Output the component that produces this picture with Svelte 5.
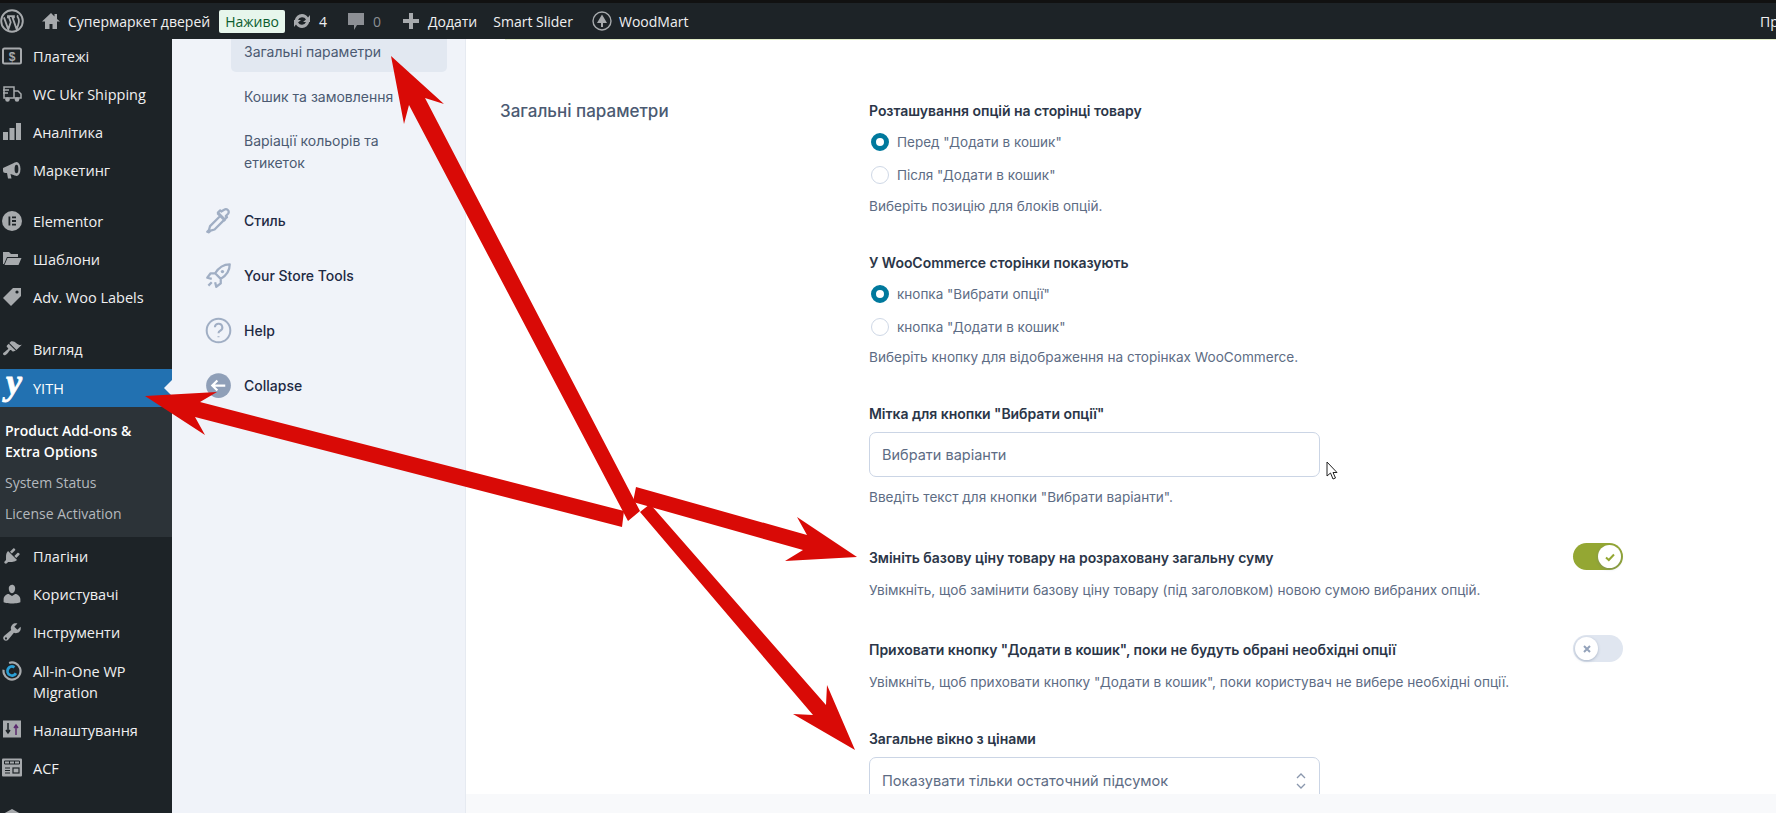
<script>
  const menuGroups = [
    [
      { label: 'Платежі', icon: 'pay' },
      { label: 'WC Ukr Shipping', icon: 'truck' },
      { label: 'Аналітика', icon: 'bars' },
      { label: 'Маркетинг', icon: 'mega' }
    ],
    [
      { label: 'Elementor', icon: 'elementor' },
      { label: 'Шаблони', icon: 'folder' },
      { label: 'Adv. Woo Labels', icon: 'tag' }
    ]
  ];

  const lowerMenu = [
    { label: 'Плагіни', icon: 'plug' },
    { label: 'Користувачі', icon: 'user' },
    { label: 'Інструменти', icon: 'wrench' },
    { label: 'All-in-One WP Migration', icon: 'migrate', tall: true },
    { label: 'Налаштування', icon: 'sliders' },
    { label: 'ACF', icon: 'acf' }
  ];

  let beforeCart = $state('before');
  let shopButton = $state('choose');
  let labelText = $state('Вибрати варіанти');
  let changePrice = $state(true);
  let hideButton = $state(false);
</script>

{#snippet menuIcon(name)}
  <svg class="micon" viewBox="0 0 20 20" aria-hidden="true">
    {#if name === 'pay'}
      <rect x="1" y="2.500" width="18" height="15" rx="1.500" fill="none" stroke="#a7aaad" stroke-width="2" />
      <text x="10" y="14.500" text-anchor="middle" font-size="12" font-weight="700" font-family="Liberation Sans" fill="#a7aaad">$</text>
    {:else if name === 'truck'}
      <path d="M2 3h10v11H2zM12 7h4l3 3v4h-7zM1 6h6M1 9h5" fill="none" stroke="#a7aaad" stroke-width="1.500" />
      <circle cx="5.500" cy="15.500" r="2.300" fill="#a7aaad" /><circle cx="15" cy="15.500" r="2.300" fill="#a7aaad" />
    {:else if name === 'bars'}
      <path d="M1 10h5v8H1zM7.500 6h5v12h-5zM14 1h5v17h-5z" fill="#a7aaad" />
    {:else if name === 'mega'}
      <path d="M1 8l12-5.500v13L8.500 14l1 4.500H6L5 13H3.500Q1 13 1 10.500z" fill="#a7aaad" />
      <ellipse cx="14.500" cy="9" rx="4" ry="7" fill="#a7aaad" />
      <ellipse cx="14.500" cy="9" rx="1.900" ry="4.300" fill="#1d2327" />
    {:else if name === 'elementor'}
      <circle cx="10" cy="10" r="10" fill="#a7aaad" />
      <path d="M6.500 5.500h1.800v9H6.500zM10 5.500h4v1.800h-4zM10 9.100h4v1.800h-4zM10 12.700h4v1.800h-4z" fill="#1d2327" />
    {:else if name === 'folder'}
      <path d="M1 3h6l2 2h7v3H5L2 15H1zM5.500 9H19.500l-3 7H2.500z" fill="#a7aaad" />
    {:else if name === 'tag'}
      <path d="M11 1h8v8L9 19l-8-8z" fill="#a7aaad" />
      <circle cx="15" cy="5" r="1.600" fill="#1d2327" />
    {:else if name === 'brush'}
      <path d="M14.480 11.060L7.410 3.990l1.500-1.500c.500-.560 2.300-.470 3.510.320 1.210.800 1.430 1.280 2.910 2.100 1.180.640 2.450 1.260 4.450.850zm-.710.710L6.700 4.700 4.930 6.470c-.390.390-.390 1.020 0 1.410l1.060 1.060c.390.390.390 1.030 0 1.420-.600.600-1.430 1.110-2.210 1.690-.350.260-.700.530-1.010.840C1.430 13.230.400 14.850 1.400 15.850c.990 1 2.620-.030 3.960-1.370.310-.310.580-.660.840-1.020.580-.780 1.090-1.610 1.690-2.210.390-.390 1.020-.390 1.410 0l1.060 1.060c.390.390 1.020.390 1.410 0z" fill="#a7aaad" />
    {:else if name === 'plug'}
      <path d="M13.110 4.360L9.870 7.600 8 5.730l3.240-3.240c.350-.340 1.050-.200 1.560.320.520.510.660 1.210.310 1.550zm-8 1.770l.910-1.120 9.010 9.010-1.190.840c-.710.710-2.630 1.160-3.820 1.160H6.140L4.900 17.260c-.590.590-1.540.590-2.120 0-.590-.580-.590-1.530 0-2.120l1.240-1.240v-3.880c0-1.130.420-3.070 1.090-3.890zm7.260 3.970l3.240-3.240c.340-.350 1.040-.200 1.560.310.510.520.660 1.220.310 1.570l-3.240 3.250z" fill="#a7aaad" />
    {:else if name === 'user'}
      <path d="M10 9.250c-2.270 0-2.730-3.440-2.730-3.440C7 4.020 7.820 2 9.970 2c2.160 0 2.980 2.020 2.710 3.810 0 0-.410 3.440-2.680 3.440zm0 2.570L12.720 10c2.390 0 4.520 2.330 4.520 4.530v2.490s-3.650 1.130-7.240 1.130c-3.650 0-7.240-1.130-7.240-1.130v-2.490c0-2.250 1.940-4.530 4.430-4.530z" fill="#a7aaad" transform="translate(-1.600 -1.600) scale(1.160)" />
    {:else if name === 'wrench'}
      <path d="M16.680 9.770c-1.340 1.340-3.300 1.670-4.950.990l-5.410 6.520c-.990.990-2.590.990-3.580 0s-.990-2.590 0-3.570l6.520-5.420c-.680-1.650-.350-3.610.990-4.950 1.280-1.280 3.120-1.620 4.720-1.060l-2.890 2.890 2.820 2.820 2.860-2.870c.530 1.580.180 3.390-1.080 4.670zM3.810 16.560c.380.380 1.010.380 1.390 0 .380-.390.380-1.010 0-1.400-.380-.380-1.010-.380-1.390 0-.390.390-.390 1.010 0 1.400z" fill="#a7aaad" transform="translate(-1 -1) scale(1.100)" />
    {:else if name === 'migrate'}
      <circle cx="10" cy="10" r="8.500" fill="none" stroke="#a7aaad" stroke-width="2.200" stroke-dasharray="44 10" transform="rotate(-110 10 10)" />
      <circle cx="10" cy="10" r="4.500" fill="none" stroke="#2a9fd6" stroke-width="2.800" stroke-dasharray="21 7" transform="rotate(30 10 10)" />
    {:else if name === 'sliders'}
      <rect x="1" y="0.500" width="18" height="17" fill="#a7aaad" />
      <path d="M6 3v9M4 10l2 3 2-3" fill="none" stroke="#1d2327" stroke-width="1.500" />
      <path d="M14 15V6M12 8l2-3 2 3" fill="none" stroke="#5b2a6e" stroke-width="1.500" />
    {:else if name === 'acf'}
      <rect x="0" y="0.500" width="20" height="18" rx="1" fill="#a7aaad" />
      <path d="M2.500 3h15v3h-15z" fill="none" stroke="#1d2327" stroke-width="1" />
      <path d="M7.500 3v3M12.500 3v3M3 10h5M3 12.500h5M3 15h5" stroke="#1d2327" stroke-width="1" />
      <rect x="11" y="10" width="6" height="5" fill="none" stroke="#1d2327" stroke-width="1.200" />
    {:else if name === 'more'}
      <path d="M10 0l9 5v15H1V5z" fill="#a7aaad" />
    {/if}
  </svg>
{/snippet}

{#snippet menuItem(item)}
  <a class="mitem" class:tall={item.tall} href="#top">
    {@render menuIcon(item.icon)}
    <span>{item.label}</span>
  </a>
{/snippet}

<div class="page">
  <header class="adminbar">
    <svg class="wp" viewBox="0 0 20 20" aria-hidden="true">
      <circle cx="10" cy="10" r="9" fill="none" stroke="#a7aaad" stroke-width="1.600" />
      <path d="M3.300 7l3.600 10 2-6-1.400-4H6.600V6h5v1h-1.200l3.500 10 1.200-3.600q1-2.900.6-4.400-.4-1.500-1-2.300-.4-.7.400-1.400" fill="none" stroke="#a7aaad" stroke-width="1.500" />
    </svg>
    <a class="bar-link site" href="#top">
      <svg viewBox="0 0 20 20" aria-hidden="true"><path d="M10 2L1 10.500h3V18h4.500v-5h3v5H16v-7.500h3L16 8V3h-2.500v2.500z" fill="#a7aaad" /></svg>
      Супермаркет дверей
    </a>
    <span class="live">Наживо</span>
    <a class="bar-link updates" href="#top">
      <svg viewBox="0 0 20 20" aria-hidden="true">
        <path d="M10 3a7 7 0 0 1 6 3.500L18 4v7h-7l3-2.500A4.500 4.500 0 0 0 6 9H2.800A7.200 7.200 0 0 1 10 3zM10 17a7 7 0 0 1-6-3.500L2 16V9h7l-3 2.500A4.500 4.500 0 0 0 14 11h3.200A7.200 7.200 0 0 1 10 17z" fill="#a7aaad" />
      </svg>
      4
    </a>
    <a class="bar-link comments" href="#top">
      <svg viewBox="0 0 20 20" aria-hidden="true"><path d="M2 2h16v12h-7l-3 5v-5H2z" fill="#8c8f94" /></svg>
      0
    </a>
    <a class="bar-link add" href="#top">
      <svg viewBox="0 0 20 20" aria-hidden="true"><path d="M8 2h4v6h6v4h-6v6H8v-6H2V8h6z" fill="#a7aaad" /></svg>
      Додати
    </a>
    <a class="bar-link smart" href="#top">Smart Slider</a>
    <a class="bar-link wood" href="#top">
      <svg viewBox="0 0 20 20" aria-hidden="true">
        <circle cx="10" cy="10" r="9" fill="none" stroke="#a7aaad" stroke-width="1.400" />
        <path d="M10 3.500l5 8.500h-4v4H9v-4H5z" fill="#a7aaad" />
      </svg>
      WoodMart
    </a>
    <span class="bar-end">Пр</span>
  </header>

  <div class="columns">
    <nav class="sidebar">
      <div class="group first">
        {#each menuGroups[0] as item}{@render menuItem(item)}{/each}
      </div>
      <div class="group">
        {#each menuGroups[1] as item}{@render menuItem(item)}{/each}
      </div>
      <div class="group third">
        {@render menuItem({ label: 'Вигляд', icon: 'brush' })}
        <a class="mitem current" href="#top">
          <span class="yith-mark">y</span>
          <span>YITH</span>
        </a>
        <div class="submenu">
          <a class="strong" href="#top">Product Add-ons &amp; Extra Options</a>
          <a href="#top">System Status</a>
          <a href="#top">License Activation</a>
        </div>
        {#each lowerMenu as item}{@render menuItem(item)}{/each}
      </div>
      <div class="group">
        <a class="mitem" href="#top">{@render menuIcon('more')}</a>
      </div>
    </nav>

    <aside class="subnav">
      <a class="subitem active" href="#top">Загальні параметри</a>
      <a class="subitem" href="#top">Кошик та замовлення</a>
      <a class="subitem" href="#top">Варіації кольорів та етикеток</a>

      <a class="navrow first" href="#top">
        <svg viewBox="0 0 24 24" aria-hidden="true">
          <path d="M13.500 8L4.500 17l-1 3.500-1.500 1.500 1.500.5 1.500-1.500 3.500-1 9-9M11 5.500l7 7M17 2.500a2.500 2.500 0 0 1 3.500 3.500L18.500 8l1 1-2 2-6-6 2-2 1 1z" fill="none" stroke="#a0aec4" stroke-width="2" stroke-linejoin="round" />
        </svg>
        Стиль
      </a>
      <a class="navrow" href="#top">
        <svg viewBox="0 0 24 24" aria-hidden="true">
          <path d="M22 2c-6 0-10 3-13 8l5 5c5-3 8-7 8-13zM9 10H5l-3 4 4 1M14 15v4l-4 3-1-4M6 18l-3 3" fill="none" stroke="#a0aec4" stroke-width="2" stroke-linejoin="round" />
          <circle cx="15.500" cy="8.500" r="1.500" fill="#a0aec4" />
        </svg>
        Your Store Tools
      </a>
      <a class="navrow" href="#top">
        <svg viewBox="0 0 24 24" aria-hidden="true">
          <circle cx="12" cy="12" r="10.500" fill="none" stroke="#a0aec4" stroke-width="1.800" />
          <path d="M8.800 9.200a3.300 3.300 0 1 1 4.800 3c-1 .6-1.600 1.200-1.600 2.300M12 17v1" fill="none" stroke="#a0aec4" stroke-width="1.800" />
        </svg>
        Help
      </a>
      <a class="navrow" href="#top">
        <svg viewBox="0 0 24 24" aria-hidden="true">
          <circle cx="12" cy="12" r="11" fill="#8f9fb8" />
          <path d="M18 12H7M11 7.500L6.500 12l4.500 4.500" fill="none" stroke="#fff" stroke-width="2" />
        </svg>
        Collapse
      </a>
    </aside>

    <main class="content">
      <h2>Загальні параметри</h2>

      <div class="fields">
        <section class="field">
          <div class="label">Розташування опцій на сторінці товару</div>
          <label class="radio"><input type="radio" bind:group={beforeCart} value="before" /><span>Перед "Додати в кошик"</span></label>
          <label class="radio"><input type="radio" bind:group={beforeCart} value="after" /><span>Після "Додати в кошик"</span></label>
          <p>Виберіть позицію для блоків опцій.</p>
        </section>

        <section class="field">
          <div class="label">У WooCommerce сторінки показують</div>
          <label class="radio"><input type="radio" bind:group={shopButton} value="choose" /><span>кнопка "Вибрати опції"</span></label>
          <label class="radio"><input type="radio" bind:group={shopButton} value="add" /><span>кнопка "Додати в кошик"</span></label>
          <p>Виберіть кнопку для відображення на сторінках WooCommerce.</p>
        </section>

        <section class="field">
          <div class="label">Мітка для кнопки "Вибрати опції"</div>
          <input class="text" type="text" bind:value={labelText} />
          <p class="after-input">Введіть текст для кнопки "Вибрати варіанти".</p>
        </section>

        <section class="field price">
          <div class="toggle-row">
            <div class="label">Змініть базову ціну товару на розраховану загальну суму</div>
            <button class="toggle" class:on={changePrice} onclick={() => (changePrice = !changePrice)} aria-label="toggle">
              <span class="knob">
                <svg viewBox="0 0 12 12"><path d="M2 6.500l2.800 2.500L10 3.500" fill="none" stroke="#94a733" stroke-width="2" /></svg>
              </span>
            </button>
          </div>
          <p class="after-toggle">Увімкніть, щоб замінити базову ціну товару (під заголовком) новою сумою вибраних опцій.</p>
        </section>

        <section class="field">
          <div class="toggle-row">
            <div class="label">Приховати кнопку "Додати в кошик", поки не будуть обрані необхідні опції</div>
            <button class="toggle" class:on={hideButton} onclick={() => (hideButton = !hideButton)} aria-label="toggle">
              <span class="knob">
                <svg viewBox="0 0 12 12"><path d="M3 3l6 6M9 3l-6 6" fill="none" stroke="#94a3bb" stroke-width="2" /></svg>
              </span>
            </button>
          </div>
          <p class="after-toggle">Увімкніть, щоб приховати кнопку "Додати в кошик", поки користувач не вибере необхідні опції.</p>
        </section>

        <section class="field">
          <div class="label">Загальне вікно з цінами</div>
          <div class="select">
            <span>Показувати тільки остаточний підсумок</span>
            <svg viewBox="0 0 12 20" aria-hidden="true"><path d="M2 7l4-4 4 4M2 13l4 4 4-4" fill="none" stroke="#8a97ad" stroke-width="1.300" /></svg>
          </div>
        </section>
      </div>
    </main>
  </div>

  <div class="footer-strip"></div>

  <!-- annotation drawn over the screenshot -->
  <svg class="arrows" viewBox="0 0 1776 813" aria-hidden="true">
    <path d="M391 56L444 104 425 98 640 511 628 521 409 105 404 124z" fill="#d90a06" />
    <path d="M145 396L217 392 200 402 624 511 622 527 195 417 205 435z" fill="#d90a06" />
    <path d="M857 557L785 561 803 550 633 502 636 487 807 535 797 517z" fill="#d90a06" />
    <path d="M855 750L793 714 813 715 640 512 650 504 826 705 827 685z" fill="#d90a06" />
  </svg>
  <svg class="cursor" viewBox="0 0 12 20" aria-hidden="true">
    <path d="M1 1v14l3.500-3 2.500 6 2.500-1-2.500-5.500H11z" fill="#fff" stroke="#222" stroke-width="1" />
  </svg>
</div>

<style>
  :global(body) {
    margin: 0;
    background: #fff;
  }

  .page {
    position: relative;
    width: 1776px;
    height: 813px;
    overflow: hidden;
    font-family: "Open Sans", "Noto Sans", sans-serif;
    display: flex;
    flex-direction: column;
  }

  a {
    text-decoration: none;
    color: inherit;
  }

  .adminbar {
    flex: none;
    height: 36px;
    border-top: 3px solid #111;
    background: #1d2327;
    color: #f0f0f1;
    display: flex;
    align-items: center;
    font-size: 14px;
  }

  .wp {
    width: 24px;
    height: 24px;
    margin-right: 17px;
  }

  .bar-link {
    display: flex;
    align-items: center;
    gap: 7px;
    white-space: nowrap;
  }

  .bar-link svg {
    width: 20px;
    height: 20px;
  }

  .site {
    margin-right: 9px;
  }

  .live {
    background: #e7f6ec;
    color: #0b5c2e;
    border-radius: 2px;
    padding: 0 6px;
    line-height: 23px;
    margin-right: 7px;
  }

  .updates {
    margin-right: 19px;
  }

  .comments {
    color: #8c8f94;
    margin-right: 20px;
  }

  .add {
    margin-right: 16px;
  }

  .smart {
    margin-right: 19px;
  }

  .bar-end {
    margin-left: auto;
    width: 16px;
    overflow: hidden;
  }

  .columns {
    flex: 1;
    display: flex;
    min-height: 0;
  }

  .sidebar {
    flex: none;
    width: 172px;
    background: #1d2327;
    color: #f0f0f1;
    font-size: 14.500px;
    overflow: hidden;
  }

  .group {
    margin-top: 13px;
  }

  .group.first {
    margin-top: -2px;
  }

  .group.third {
    margin-top: 14px;
  }

  .mitem {
    display: flex;
    align-items: center;
    height: 38px;
    padding-left: 6px;
    position: relative;
  }

  .mitem.tall {
    height: 60px;
    line-height: 21px;
    align-items: flex-start;
    padding-top: 10px;
    box-sizing: border-box;
  }

  .mitem span {
    padding-left: 12px;
  }

  .mitem.tall span {
    padding-right: 20px;
  }

  .micon {
    width: 20px;
    height: 20px;
    flex: none;
    margin-left: -4px;
    margin-right: -1px;
  }

  .current {
    background: #2271b1;
    color: #fff;
    margin-top: 1px;
  }

  .current::after {
    content: "";
    position: absolute;
    right: 0;
    top: 50%;
    margin-top: -8px;
    border: 8px solid transparent;
    border-right-color: #f0f3f9;
  }

  .mitem .yith-mark {
    font-family: "Liberation Serif", serif;
    font-style: italic;
    font-weight: 700;
    font-size: 36px;
    line-height: 20px;
    width: 20px;
    margin-left: -2px;
    margin-right: -3px;
    margin-top: -12px;
    padding: 0;
    text-align: center;
    -webkit-text-stroke: 0.8px #fff;
  }

  .submenu {
    background: #2c3338;
    padding: 8px 0 8px 5px;
    font-size: 14px;
    color: #b4b9be;
    display: flex;
    flex-direction: column;
  }

  .submenu a {
    line-height: 21px;
    padding: 5px 0;
  }

  .submenu a.strong {
    color: #fff;
    font-weight: 600;
    padding-right: 20px;
  }

  .subnav {
    flex: none;
    width: 293px;
    background: #f0f3f9;
    border-right: 1px solid #e6eaf1;
    font-family: Inter, sans-serif;
    font-size: 14px;
    color: #4b5a72;
    display: flex;
    flex-direction: column;
    align-items: flex-start;
    overflow: hidden;
  }

  .subitem {
    display: block;
    width: 216px;
    margin-left: 59px;
    box-sizing: border-box;
    padding: 11px 13px;
    line-height: 22px;
    border-radius: 5px;
  }

  .subitem.active {
    background: #e2e8f1;
    margin-top: -9px;
    margin-bottom: 3px;
    padding-bottom: 9px;
  }

  .navrow {
    display: flex;
    align-items: center;
    gap: 12px;
    flex: none;
    height: 55px;
    margin-left: 33px;
    color: #1e2a44;
    font-weight: 500;
  }

  .navrow svg {
    width: 27px;
    height: 27px;
  }

  .navrow.first {
    margin-top: 8px;
  }

  .content {
    flex: 1;
    position: relative;
    background: #fff;
    display: flex;
    font-family: Inter, sans-serif;
    padding: 61px 0 0 34px;
    min-width: 0;
  }

  /* bottom edge of a notice scrolled under the admin bar */
  .content::before {
    content: "";
    position: absolute;
    left: 39px;
    right: 0;
    top: 0;
    height: 1px;
    background: #e3edc9;
  }

  h2 {
    margin: -1px 0 0;
    width: 369px;
    flex: none;
    font-size: 17px;
    font-weight: 500;
    line-height: 24px;
    color: #4b5a72;
  }

  .fields {
    width: 754px;
    flex: none;
  }

  .field {
    margin-bottom: 35px;
  }

  .field.price {
    margin-bottom: 34px;
  }

  .label {
    font-size: 14px;
    font-weight: 600;
    line-height: 22px;
    letter-spacing: -0.04px;
    color: #2b3648;
  }

  .field p {
    margin: 3px 0 0;
    font-size: 13.600px;
    line-height: 22px;
    color: #5d6c84;
  }

  .radio {
    display: flex;
    align-items: center;
    height: 33px;
    font-size: 13.500px;
    color: #5d6c84;
  }

  .radio:first-of-type {
    margin-top: 3.500px;
  }

  .radio input {
    appearance: none;
    width: 18px;
    height: 18px;
    margin: 0 8px 0 2px;
    border-radius: 50%;
    border: 1px solid #cfd8e6;
    background: #fff;
  }

  .radio input:checked {
    border: 5px solid #00799d;
  }

  .text {
    display: block;
    width: 451px;
    height: 45px;
    box-sizing: border-box;
    margin-top: 7px;
    padding: 0 12px;
    border: 1px solid #cbd5e5;
    border-radius: 7px;
    font: 14.500px Inter, sans-serif;
    color: #5d6c84;
    outline: none;
  }

  .field p.after-input,
  .field p.after-toggle {
    margin-top: 9px;
  }

  .toggle-row {
    display: flex;
    justify-content: space-between;
    align-items: center;
  }

  .toggle-row .label {
    margin-top: 3px;
  }

  .toggle {
    width: 50px;
    height: 27px;
    border: 0;
    padding: 0 2px;
    border-radius: 14px;
    background: #e0e6f0;
    display: flex;
    align-items: center;
    box-sizing: border-box;
  }

  .toggle.on {
    background: #94a733;
    justify-content: flex-end;
  }

  .knob {
    width: 23px;
    height: 23px;
    border-radius: 50%;
    background: #fff;
    box-shadow: 0 1px 3px rgba(90, 110, 140, 0.4);
    display: flex;
    align-items: center;
    justify-content: center;
  }

  .knob svg {
    width: 12px;
    height: 12px;
  }

  .select {
    margin-top: 7px;
    width: 451px;
    height: 48px;
    box-sizing: border-box;
    padding: 0 12px;
    border: 1px solid #cbd5e5;
    border-radius: 7px;
    display: flex;
    align-items: center;
    justify-content: space-between;
    font-size: 14.600px;
    color: #5d6c84;
  }

  .select svg {
    width: 12px;
    height: 20px;
  }

  .footer-strip {
    position: absolute;
    left: 466px;
    right: 0;
    bottom: 0;
    height: 19px;
    background: #f8f9fb;
  }

  .arrows {
    position: absolute;
    inset: 0;
    width: 1776px;
    height: 813px;
    pointer-events: none;
  }

  .cursor {
    position: absolute;
    left: 1326px;
    top: 461px;
    width: 12px;
    height: 20px;
  }
</style>
